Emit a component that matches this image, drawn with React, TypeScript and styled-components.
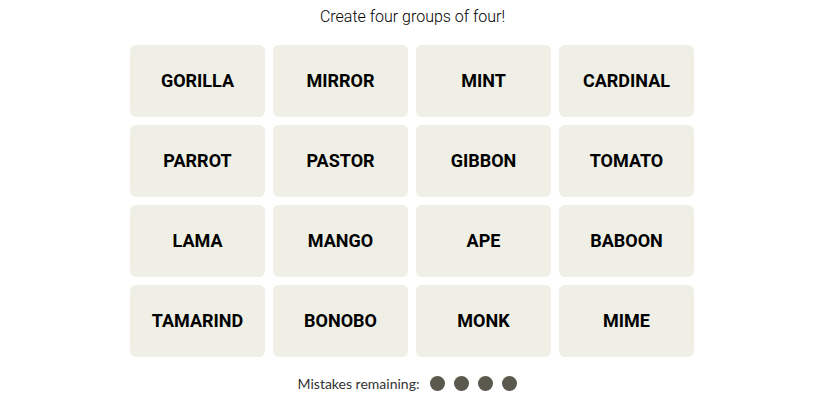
import React from "react";
import styled, { createGlobalStyle } from "styled-components";

const Global = createGlobalStyle`
  html, body { margin: 0; padding: 0; background: #fff; }
  body { font-family: "Roboto", "Liberation Sans", sans-serif; }
`;

const Page = styled.div`
  width: 825px;
  height: 413px;
  display: flex;
  flex-direction: column;
  align-items: center;
`;

const Title = styled.div`
  margin-top: 7px;
  height: 20px;
  font-family: "Roboto", sans-serif;
  font-size: 16px;
  font-weight: 300;
  color: #000;
  line-height: 20px;
`;

const Grid = styled.div`
  margin-top: 18px;
  margin-right: 1px;
  display: grid;
  grid-template-columns: repeat(4, 135px);
  grid-auto-rows: 72px;
  gap: 8px 8px;
`;

const Tile = styled.div`
  background: #efefe6;
  border-radius: 6px;
  display: flex;
  align-items: center;
  justify-content: center;
  padding-bottom: 2px;
  box-sizing: border-box;
  font-family: "Roboto", sans-serif;
  font-weight: 700;
  font-size: 18px;
  color: #000;
`;

const Mistakes = styled.div`
  margin-top: 18px;
  margin-right: 10px;
  display: flex;
  align-items: center;
  gap: 11px;
  font-family: "Lato", sans-serif;
  font-size: 14px;
  color: #333;
`;

const Dots = styled.div`
  display: flex;
  gap: 9px;
`;

const Dot = styled.span`
  width: 15px;
  height: 15px;
  border-radius: 50%;
  background: #5a594e;
`;

const words = [
  "GORILLA", "MIRROR", "MINT", "CARDINAL",
  "PARROT", "PASTOR", "GIBBON", "TOMATO",
  "LAMA", "MANGO", "APE", "BABOON",
  "TAMARIND", "BONOBO", "MONK", "MIME",
];

export default function App() {
  return (
    <Page>
      <Global />
      <Title>Create four groups of four!</Title>
      <Grid>
        {words.map((w) => (
          <Tile key={w}>{w}</Tile>
        ))}
      </Grid>
      <Mistakes>
        <span>Mistakes remaining:</span>
        <Dots>
          <Dot />
          <Dot />
          <Dot />
          <Dot />
        </Dots>
      </Mistakes>
    </Page>
  );
}
